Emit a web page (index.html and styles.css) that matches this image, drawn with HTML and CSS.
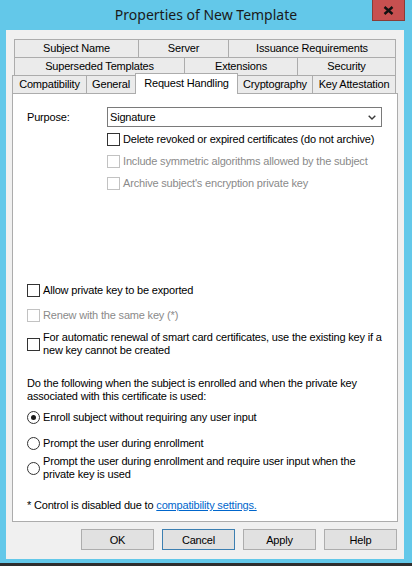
FILE: index.html
```html
<!DOCTYPE html>
<html>
<head>
<meta charset="utf-8">
<title>Properties of New Template</title>
<link rel="stylesheet" href="styles.css">
</head>
<body>
<div class="window">
  <div class="titlebar">
    <div class="title">Properties of New Template</div>
    <div class="close">
      <svg width="11" height="9" viewBox="0 0 11 9"><path d="M1.5 1 L9.5 8 M9.5 1 L1.5 8" stroke="#111" stroke-width="2.4" fill="none"/></svg>
    </div>
  </div>
  <div class="client">
    <div class="tabs">
      <div class="tabrow">
        <div class="tab w-subject">Subject Name</div>
        <div class="tab w-server">Server</div>
        <div class="tab w-issuance last">Issuance Requirements</div>
      </div>
      <div class="tabrow">
        <div class="tab w-superseded">Superseded Templates</div>
        <div class="tab w-extensions">Extensions</div>
        <div class="tab w-security last">Security</div>
      </div>
      <div class="tabrow bottom">
        <div class="tab w-compat">Compatibility</div>
        <div class="tab w-general">General</div>
        <div class="tab w-request sel">Request Handling</div>
        <div class="tab w-crypto">Cryptography</div>
        <div class="tab w-key last">Key Attestation</div>
      </div>
    </div>
    <div class="panel">
      <div class="purpose">
        <div class="purpose-label">Purpose:</div>
        <div class="select">
          <span>Signature</span>
          <svg width="8" height="5" viewBox="0 0 8 5"><path d="M0.7 0.7 L4 4 L7.3 0.7" stroke="#3a3a3a" stroke-width="1.4" fill="none"/></svg>
        </div>
      </div>
      <div class="opt indent mt-6"><span class="box"></span><span>Delete revoked or expired certificates (do not archive)</span></div>
      <div class="opt indent mt-9 disabled"><span class="box"></span><span>Include symmetric algorithms allowed by the subject</span></div>
      <div class="opt indent mt-9 disabled"><span class="box"></span><span>Archive subject's encryption private key</span></div>

      <div class="opt mt-94"><span class="box"></span><span>Allow private key to be exported</span></div>
      <div class="opt mt-12 disabled"><span class="box"></span><span>Renew with the same key (*)</span></div>
      <div class="opt mt-9"><span class="box"></span><span>For automatic renewal of smart card certificates, use the existing key if a<br>new key cannot be created</span></div>

      <div class="text mt-20">Do the following when the subject is enrolled and when the private key<br>associated with this certificate is used:</div>
      <div class="opt mt-8"><span class="radio on"></span><span>Enroll subject without requiring any user input</span></div>
      <div class="opt mt-13"><span class="radio"></span><span>Prompt the user during enrollment</span></div>
      <div class="opt mt-5"><span class="radio"></span><span>Prompt the user during enrollment and require user input when the<br>private key is used</span></div>

      <div class="text mt-18">* Control is disabled due to <span class="link">compatibility settings.</span></div>
    </div>
    <div class="buttons">
      <div class="btn">OK</div>
      <div class="btn default">Cancel</div>
      <div class="btn">Apply</div>
      <div class="btn">Help</div>
    </div>
  </div>
</div>
</body>
</html>
```

FILE: styles.css
```css
* { box-sizing: border-box; }
html, body { margin: 0; padding: 0; }
body {
  width: 412px;
  height: 566px;
  overflow: hidden;
  background: #2e2e2e;
  font-family: "Liberation Sans", Arial, sans-serif;
  font-size: 11px;
  letter-spacing: -0.18px;
  color: #000;
}
.window {
  height: 563px;
  background: #63c8e9;
  display: flex;
  flex-direction: column;
}
.titlebar {
  height: 30px;
  position: relative;
  display: flex;
  align-items: center;
  justify-content: center;
}
.title {
  font-family: "Noto Sans", "Open Sans", sans-serif;
  font-size: 14px;
  letter-spacing: 0;
  color: #1a1a1a;
  line-height: 18px;
}
.close {
  position: absolute;
  top: 0;
  right: 7px;
  width: 33px;
  height: 21px;
  background: #c75050;
  border: 1px solid #8a3c37;
  border-top: none;
  display: flex;
  align-items: center;
  justify-content: center;
}
.client {
  margin: 0 8px 0 6px;
  height: 529px;
  background: #f0f0f0;
  padding: 9px 6px 0 6px;
  display: flex;
  flex-direction: column;
}
.tabrow {
  display: flex;
  align-items: flex-start;
  height: 18px;
  margin: 0 2px;
}
.tabrow.bottom { margin-left: 0; }
.tab {
  height: 18px;
  flex: none;
  border-top: 1px solid #acacac;
  border-left: 1px solid #acacac;
  background: #ebebeb;
  display: flex;
  align-items: center;
  justify-content: center;
  line-height: 13px;
  white-space: nowrap;
}
.tab.last { border-right: 1px solid #acacac; }
.tab.sel {
  background: #fff;
  height: 21px;
  margin-top: -2px;
  margin-right: -1px;
  border-right: 1px solid #acacac;
  position: relative;
  z-index: 1;
  padding-bottom: 2px;
}
.w-subject { width: 124px; }
.w-server { width: 90px; }
.w-issuance { width: 168px; }
.w-superseded { width: 170px; }
.w-extensions { width: 113px; }
.w-security { width: 99px; }
.w-compat { width: 74px; }
.w-general { width: 49px; }
.w-request { width: 103px; }
.w-crypto { width: 75px; }
.w-key { width: 84px; }

.panel {
  height: 429px;
  background: #fff;
  border: 1px solid #acacac;
  padding: 0 0 0 14px;
  display: flex;
  flex-direction: column;
}
.purpose {
  display: flex;
  align-items: center;
  height: 20px;
  margin-top: 13px;
}
.purpose-label { width: 80px; }
.select {
  width: 275px;
  height: 20px;
  border: 1px solid #7a7a7a;
  background: #fff;
  display: flex;
  align-items: center;
  justify-content: space-between;
  padding: 0 5px 0 2px;
}
.opt {
  display: flex;
  align-items: center;
  gap: 3px;
  line-height: 13px;
  white-space: nowrap;
}
.indent { margin-left: 80px; }
.text { line-height: 13px; white-space: nowrap; }
.box {
  width: 13px;
  height: 13px;
  flex: none;
  border: 1px solid #333;
  background: #fff;
}
.disabled { color: #8a8a8a; }
.disabled .box { border-color: #c2c2c2; }
.radio {
  width: 13px;
  height: 13px;
  flex: none;
  border: 1px solid #333;
  border-radius: 50%;
  background: #fff;
  display: flex;
  align-items: center;
  justify-content: center;
}
.radio.on::after {
  content: "";
  width: 5px;
  height: 5px;
  border-radius: 50%;
  background: #1a1a1a;
}
.link { color: #0066cc; text-decoration: underline; }

.mt-5 { margin-top: 5px; }
.mt-6 { margin-top: 6px; }
.mt-8 { margin-top: 8px; }
.mt-9 { margin-top: 9px; }
.mt-12 { margin-top: 12px; }
.mt-13 { margin-top: 13px; }
.mt-18 { margin-top: 18px; }
.mt-20 { margin-top: 20px; }
.mt-94 { margin-top: 94px; }

.buttons {
  display: flex;
  justify-content: flex-end;
  gap: 8px;
  margin-top: 7px;
  padding-right: 1px;
}
.btn {
  width: 73px;
  height: 21px;
  border: 1px solid #adadad;
  background: #e1e1e1;
  display: flex;
  align-items: center;
  justify-content: center;
}
.btn.default { border-color: #3c7fb1; }
```
